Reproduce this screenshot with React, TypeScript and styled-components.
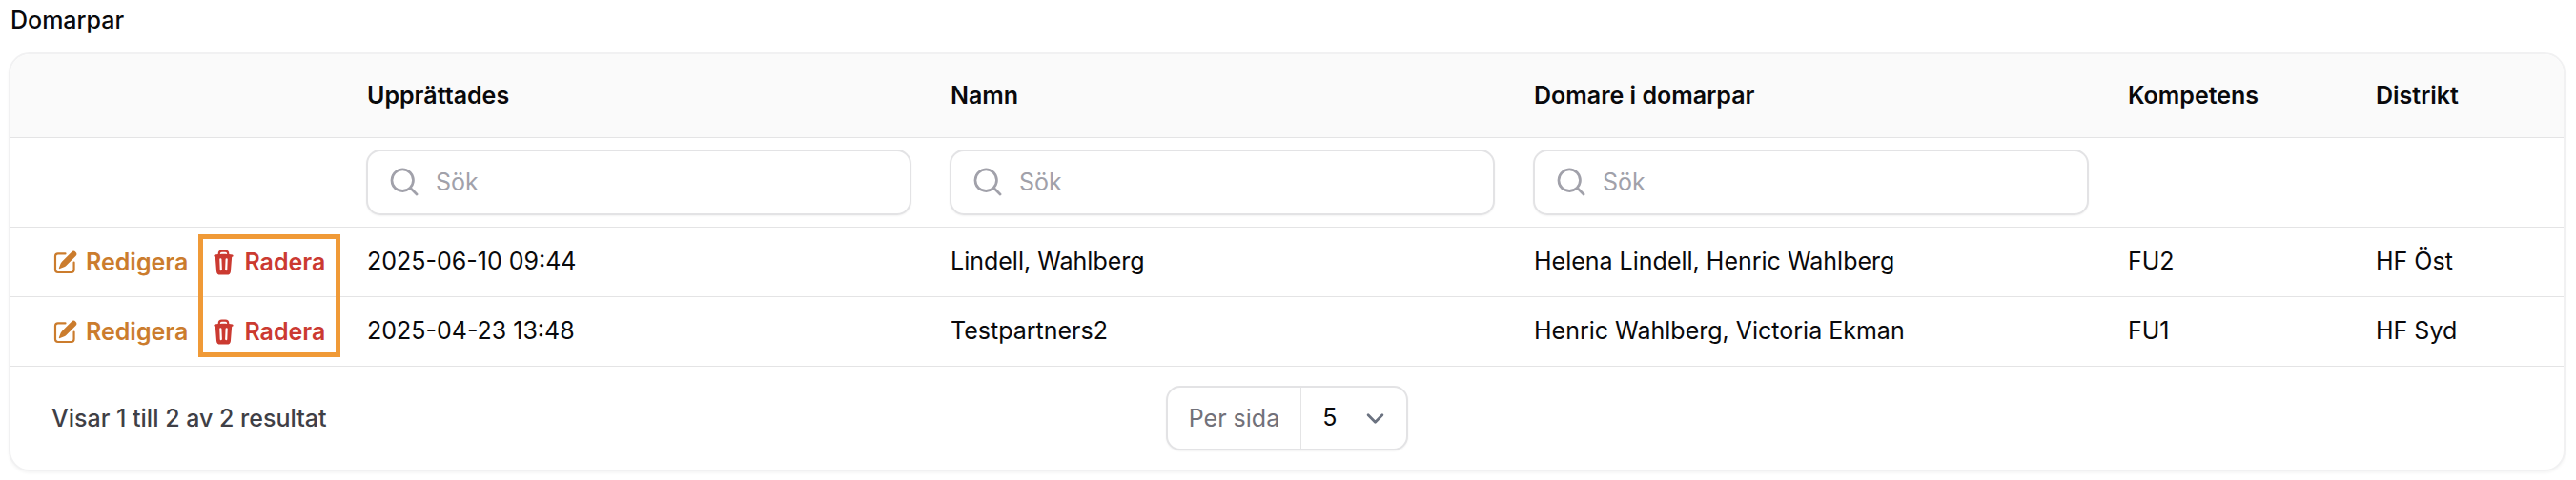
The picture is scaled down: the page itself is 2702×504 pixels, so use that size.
import React from 'react';
import styled, { createGlobalStyle } from 'styled-components';
import { HiMiniMagnifyingGlass, HiMiniPencilSquare, HiMiniTrash } from 'react-icons/hi2';

const GlobalStyle = createGlobalStyle`
  *, *::before, *::after { box-sizing: border-box; }
  body {
    margin: 0;
    background: #fff;
    color: #09090b;
    font-family: Inter, "Liberation Sans", sans-serif;
    font-size: 25px;
    line-height: 36px;
  }
  button, input, select { font: inherit; color: inherit; }
`;

const Page = styled.main`
  padding: 3px 11px 10px 9px;
`;

const Title = styled.h1`
  margin: 0 0 16px;
  padding-left: 2px;
  font-size: 25px;
  font-weight: 500;
  line-height: 36px;
`;

const Card = styled.section`
  border: 2px solid #f1f1f2;
  border-radius: 22px;
  background: #fff;
  box-shadow: 0 2px 3px rgba(0, 0, 0, 0.04);
`;

const Table = styled.table`
  width: 100%;
  table-layout: fixed;
  border-collapse: separate;
  border-spacing: 0;
  text-align: left;
`;

const Column = styled.col<{ $width?: number }>`
  width: ${({ $width }) => ($width ? `${$width}px` : 'auto')};
`;

const HeaderCell = styled.th`
  height: 88px;
  padding: 0 20px 2px 21px;
  border-bottom: 1px solid #e4e4e5;
  background: #fafafa;
  font-weight: 600;
  &:first-child { border-top-left-radius: 20px; }
  &:last-child { border-top-right-radius: 20px; }
`;

const FilterCell = styled.td`
  padding: 12px 20px;
  border-bottom: 1px solid #e4e4e5;
`;

const Cell = styled.td`
  padding: 17px 20px 19px 21px;
  border-bottom: 1px solid #e4e4e5;
`;

const ActionCell = styled(Cell)`
  padding: 18px 0 18px 43px;
`;

const SearchBox = styled.label`
  display: flex;
  align-items: center;
  gap: 15px;
  height: 69px;
  padding: 0 20px 2px;
  border: 2px solid #e3e3e5;
  border-radius: 15px;
  background: #fff;
  box-shadow: 0 1px 2px rgba(0, 0, 0, 0.05);
  color: #a1a1aa;
  svg { flex: none; }
`;

const SearchInput = styled.input`
  flex: 1;
  min-width: 0;
  padding: 0;
  border: 0;
  outline: 0;
  background: transparent;
  color: #09090b;
  &::placeholder { color: #a1a1aa; opacity: 1; }
`;

const Actions = styled.div`
  display: flex;
  align-items: center;
  gap: 23px;
`;

const ActionButton = styled.button<{ $tone: 'edit' | 'delete' }>`
  display: flex;
  align-items: center;
  gap: 7px;
  padding: 0;
  border: 0;
  background: none;
  color: ${({ $tone }) => ($tone === 'edit' ? '#cb7c2d' : '#cb3a31')};
  font-weight: 600;
  cursor: pointer;
`;

const DeleteSlot = styled.div`
  position: relative;
`;

const Highlight = styled.span`
  position: absolute;
  z-index: 1;
  top: -11px;
  left: -12px;
  right: -16px;
  height: 129px;
  border: 5px solid #f09a37;
  pointer-events: none;
`;

const Footer = styled.footer`
  display: grid;
  grid-template-columns: 1fr auto 1fr;
  align-items: center;
  padding: 20px 43px;
`;

const Summary = styled.span`
  color: #3f3f46;
  font-weight: 500;
`;

const PageSize = styled.div`
  display: flex;
  height: 68px;
  border: 2px solid #e3e3e5;
  border-radius: 15px;
  background: #fff;
  box-shadow: 0 1px 2px rgba(0, 0, 0, 0.05);
`;

const PageSizeLabel = styled.label`
  display: flex;
  align-items: center;
  padding: 0 22px;
  border-right: 1px solid #e4e4e5;
  color: #71717a;
`;

const SelectWrap = styled.div`
  position: relative;
  display: flex;
  width: 110px;
`;

const Select = styled.select`
  width: 100%;
  padding: 0 22px 2px;
  border: 0;
  outline: 0;
  background: transparent;
  appearance: none;
`;

const Chevron = styled.svg`
  position: absolute;
  top: 14px;
  right: 14px;
  pointer-events: none;
`;

const columns = [
  { label: 'Upprättades', searchable: true },
  { label: 'Namn', searchable: true },
  { label: 'Domare i domarpar', searchable: true, width: 623 },
  { label: 'Kompetens', searchable: false, width: 260 },
  { label: 'Distrikt', searchable: false, width: 218 },
];

const rows = [
  ['2025-06-10 09:44', 'Lindell, Wahlberg', 'Helena Lindell, Henric Wahlberg', 'FU2', 'HF Öst'],
  ['2025-04-23 13:48', 'Testpartners2', 'Henric Wahlberg, Victoria Ekman', 'FU1', 'HF Syd'],
];

export default function App() {
  return (
    <>
      <GlobalStyle />
      <Page>
        <Title>Domarpar</Title>
        <Card>
          <Table>
            <colgroup>
              <Column $width={353} />
              {columns.map((c) => <Column key={c.label} $width={c.width} />)}
            </colgroup>
            <thead>
              <tr>
                <HeaderCell />
                {columns.map((c) => <HeaderCell key={c.label} scope="col">{c.label}</HeaderCell>)}
              </tr>
            </thead>
            <tbody>
              <tr>
                <FilterCell />
                {columns.map((c) => (
                  <FilterCell key={c.label}>
                    {c.searchable && (
                      <SearchBox>
                        <HiMiniMagnifyingGlass size={36} aria-hidden />
                        <SearchInput type="text" placeholder="Sök" aria-label={c.label} />
                      </SearchBox>
                    )}
                  </FilterCell>
                ))}
              </tr>
              {rows.map((row, index) => (
                <tr key={row[0]}>
                  <ActionCell>
                    <Actions>
                      <ActionButton type="button" $tone="edit">
                        <HiMiniPencilSquare size={29} aria-hidden />
                        Redigera
                      </ActionButton>
                      <DeleteSlot>
                        <ActionButton type="button" $tone="delete">
                          <HiMiniTrash size={29} aria-hidden />
                          Radera
                        </ActionButton>
                        {index === 0 && <Highlight />}
                      </DeleteSlot>
                    </Actions>
                  </ActionCell>
                  {row.map((value) => <Cell key={value}>{value}</Cell>)}
                </tr>
              ))}
            </tbody>
          </Table>
          <Footer>
            <Summary>Visar 1 till 2 av 2 resultat</Summary>
            <PageSize>
              <PageSizeLabel htmlFor="page-size">Per sida</PageSizeLabel>
              <SelectWrap>
                <Select id="page-size" defaultValue="5">
                  <option>5</option>
                  <option>10</option>
                  <option>25</option>
                </Select>
                <Chevron width="37" height="37" viewBox="0 0 20 20" fill="none" aria-hidden>
                  <path d="M6 8l4 4 4-4" stroke="#6b7280" strokeWidth="1.5" strokeLinecap="round" strokeLinejoin="round" />
                </Chevron>
              </SelectWrap>
            </PageSize>
          </Footer>
        </Card>
      </Page>
    </>
  );
}
